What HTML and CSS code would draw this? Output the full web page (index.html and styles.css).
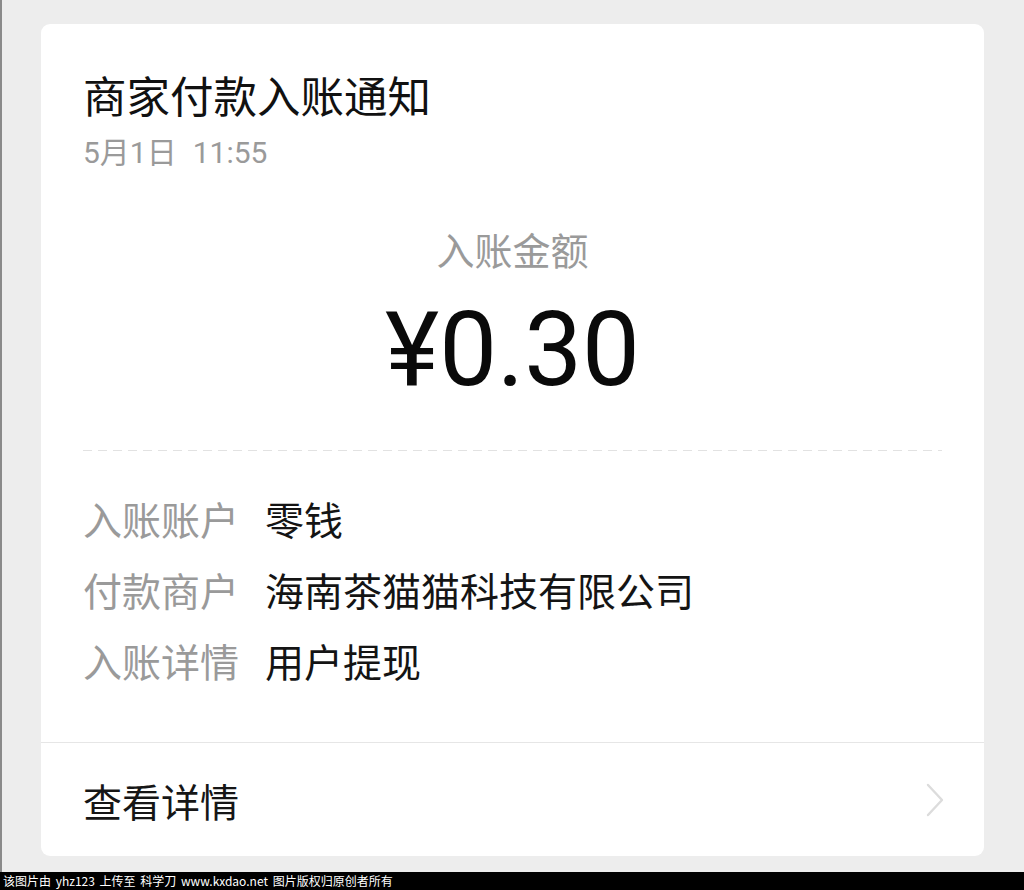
FILE: index.html
```html
<!DOCTYPE html>
<html lang="zh-CN">
<head>
    <meta charset="UTF-8">
    <meta name="viewport" content="width=device-width, initial-scale=1.0">
    <title>商家付款入账通知</title>
    <link rel="stylesheet" href="styles.css">
</head>
<body>
    <div class="screen">
        <div class="card">
            <div class="head">
                <h1 class="title">商家付款入账通知</h1>
                <div class="date">5月1日<span class="time">11:55</span></div>
            </div>

            <div class="amount-box">
                <div class="amount-label">入账金额</div>
                <div class="amount">¥0.30</div>
            </div>

            <div class="dash"></div>

            <div class="info">
                <div class="info-label">入账账户</div>
                <div class="info-value">零钱</div>
                <div class="info-label">付款商户</div>
                <div class="info-value">海南茶猫猫科技有限公司</div>
                <div class="info-label">入账详情</div>
                <div class="info-value">用户提现</div>
            </div>

            <div class="more">
                <span>查看详情</span>
                <svg class="arrow" width="20" height="34" viewBox="0 0 20 34">
                    <polyline points="3,2 17,17 3,32" fill="none" stroke="#dcdcdc" stroke-width="2.4" stroke-linecap="round" stroke-linejoin="round"/>
                </svg>
            </div>
        </div>
    </div>
    <div class="footer">该图片由 yhz123 上传至 科学刀 www.kxdao.net 图片版权归原创者所有</div>
</body>
</html>
```

FILE: styles.css
```css
body {
    margin: 0;
    background-color: #ededed;
    font-family: Roboto, "Noto Sans CJK SC", sans-serif;
    overflow: hidden;
}
.screen {
    height: 872px;
    border-left: 2px solid #8a8a8a;
    padding-top: 24px;
    box-sizing: border-box;
}
.card {
    margin-left: 39px;
    width: 943px;
    background-color: #fff;
    border-radius: 9px;
    overflow: hidden;
}
.head {
    padding: 47px 42px 0;
}
.title {
    margin: 0;
    font-size: 43.5px;
    font-weight: normal;
    line-height: 56px;
    color: #111;
}
.date {
    margin-top: 6px;
    font-size: 30px;
    line-height: 40px;
    color: #9a9a9a;
}
.time {
    margin-left: 16px;
}
.amount-box {
    text-align: center;
    margin-top: 55px;
}
.amount-label {
    font-size: 38px;
    line-height: 48px;
    color: #9a9a9a;
}
.amount {
    margin-top: 14px;
    font-size: 103px;
    line-height: 120px;
    color: #0a0a0a;
}
.dash {
    margin: 40px 42px 0;
    height: 1px;
    background-image: repeating-linear-gradient(to right, #e2e2e2 0, #e2e2e2 9px, transparent 9px, transparent 15px);
}
.info {
    display: grid;
    grid-template-columns: auto 1fr;
    column-gap: 26px;
    padding: 36px 42px 42px;
    font-size: 39px;
    line-height: 71px;
}
.info-label {
    color: #9a9a9a;
}
.info-value {
    color: #141414;
}
.more {
    display: flex;
    align-items: center;
    justify-content: space-between;
    height: 113px;
    padding: 0 39px 0 42px;
    border-top: 1px solid #e6e6e6;
    font-size: 39px;
    color: #161616;
}
.footer {
    height: 18px;
    background-color: #000;
    color: #fff;
    font-family: "Noto Sans CJK SC", sans-serif;
    font-size: 12px;
    line-height: 18px;
    padding-left: 3px;
    word-spacing: 2px;
    white-space: nowrap;
}
```
